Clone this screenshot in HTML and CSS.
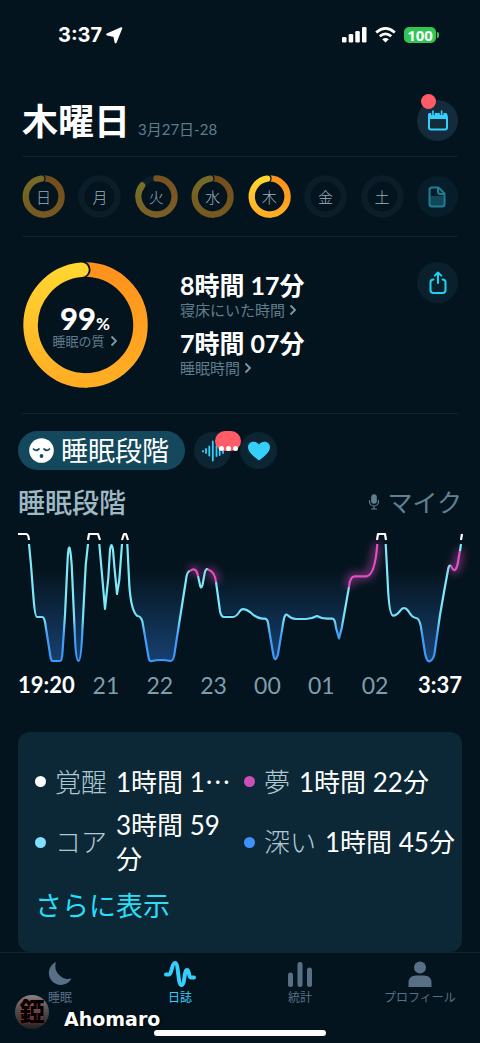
FILE: index.html
```html
<!DOCTYPE html>
<html lang="ja">
<head>
<meta charset="utf-8">
<meta name="viewport" content="width=device-width, initial-scale=1">
<title>睡眠日誌</title>
<link rel="stylesheet" href="styles.css">
</head>
<body>
<svg class="defs" aria-hidden="true">
  <defs>
    <linearGradient id="ring-right" x1="0" y1="0" x2="0" y2="1"><stop offset="0" stop-color="#ff921c"/><stop offset="1" stop-color="#ffae24"/></linearGradient>
    <linearGradient id="ring-left" x1="0" y1="0" x2="0" y2="1"><stop offset="0" stop-color="#ffd530"/><stop offset="1" stop-color="#ffae24"/></linearGradient>
  </defs>
  <symbol id="ring-full" viewBox="0 0 44 44">
    <path d="M22 3.5A18.5 18.5 0 0 1 22 40.5" fill="none" stroke="url(#ring-right)" stroke-width="6.5"/>
    <circle cx="20" cy="3.6" r="4.2" fill="#04141e"/>
    <path d="M22 40.5A18.5 18.5 0 0 1 19.600 3.700" fill="none" stroke="url(#ring-left)" stroke-width="6.5" stroke-linecap="round"/>
  </symbol>
  <symbol id="ring-part" viewBox="0 0 44 44">
    <path d="M22 3.5A18.5 18.5 0 0 1 22 40.5" fill="none" stroke="url(#ring-right)" stroke-width="6.5" stroke-linecap="round"/>
    <path d="M22 40.5A18.5 18.5 0 0 1 7.3 10.7" fill="none" stroke="url(#ring-left)" stroke-width="6.5" stroke-linecap="round"/>
  </symbol>
  <symbol id="ring-track" viewBox="0 0 44 44"><circle cx="22" cy="22" r="18.5" fill="none" stroke="#0a1d29" stroke-width="6.5"/></symbol>
  <symbol id="chevron" viewBox="0 0 8 12"><path d="M1.5 1.5L6 6L1.5 10.5" fill="none" stroke="currentColor" stroke-width="1.8"/></symbol>
</svg>

<div class="app">
  <div class="status">
    <div class="status-time">3:37
      <svg width="17" height="17" viewBox="0 0 17 17"><path d="M15.300 1.200L9.600 15.300L8.300 9L1.200 7.400Z" fill="#fff" stroke="#fff" stroke-width="2" stroke-linejoin="round"/></svg>
    </div>
    <div class="status-icons">
      <svg width="25" height="16" viewBox="0 0 25 16" fill="#fff"><rect y="10" width="4.5" height="5.5" rx="1.3"/><rect x="6.7" y="7" width="4.5" height="8.5" rx="1.3"/><rect x="13.3" y="4" width="4.5" height="11.5" rx="1.3"/><rect x="20" y="0" width="4.5" height="15.5" rx="1.3"/></svg>
      <svg width="21" height="16" viewBox="0 0 21 16" fill="none" stroke="#fff" stroke-width="2.7"><path d="M1.2 5.5Q10.5-2.6 19.8 5.5"/><path d="M4.8 9.3Q10.5 4.4 16.2 9.3"/><path d="M10.5 15.5L7.2 12.2Q10.5 9.6 13.8 12.2Z" fill="#fff" stroke="none"/></svg>
      <span class="battery">100</span>
    </div>
  </div>

  <header class="header divided">
    <div class="title-group">
      <h1 class="title">木曜日</h1>
      <span class="date">3月27日-28</span>
    </div>
    <button class="round calendar" aria-label="カレンダー">
      <svg width="22" height="22" viewBox="0 0 22 22"><path d="M1 4Q1 3 3 3H4.2V4.5A1.8 1.8 0 0 0 7.8 4.5V3H12.8V4.5A1.8 1.8 0 0 0 16.4 4.5V3H18.5Q20.5 3 20.5 5V9H1Z" fill="#35cffc"/><path d="M6 1V4.5M14.6 1V4.5" stroke="#35cffc" stroke-width="1.7" stroke-linecap="round"/><rect x="2" y="6" width="18" height="13.5" rx="2" fill="none" stroke="#35cffc" stroke-width="2"/></svg>
      <span class="dot-badge"></span>
    </button>
  </header>

  <nav class="days divided" aria-label="曜日">
    <button class="day"><svg class="dim"><use href="#ring-full"/></svg><span>日</span></button>
    <button class="day"><svg><use href="#ring-track"/></svg><span>月</span></button>
    <button class="day"><svg><use href="#ring-track"/></svg><svg class="dim"><use href="#ring-part"/></svg><span>火</span></button>
    <button class="day"><svg class="dim"><use href="#ring-full"/></svg><span>水</span></button>
    <button class="day" aria-current="date"><svg><use href="#ring-full"/></svg><span>木</span></button>
    <button class="day"><svg><use href="#ring-track"/></svg><span>金</span></button>
    <button class="day"><svg><use href="#ring-track"/></svg><span>土</span></button>
    <button class="round note" aria-label="メモ">
      <svg width="18" height="22" viewBox="0 0 18 22"><path d="M2 10H16V19Q16 20 15 20H3Q2 20 2 19Z" fill="#124758"/><path d="M10.5 1.5H4Q1.5 1.5 1.5 4V18Q1.5 20.5 4 20.5H14Q16.500 20.500 16.500 18V7.500Z" fill="none" stroke="#1f7d94" stroke-width="2" stroke-linejoin="round"/><path d="M10 2V5.500Q10 8 12.500 8H16" fill="none" stroke="#1f7d94" stroke-width="2"/></svg>
    </button>
  </nav>

  <section class="summary divided">
    <button class="score">
      <svg class="score-ring" viewBox="0 0 126 126" fill="none" stroke-width="14.500">
        <path d="M63 7.500A55.500 55.500 0 0 1 63 118.500" stroke="url(#ring-right)"/>
        <circle cx="60" cy="7.700" r="8.600" fill="#04141e"/>
        <path d="M63 118.500A55.500 55.500 0 0 1 59.500 7.700" stroke="url(#ring-left)" stroke-linecap="round"/>
      </svg>
      <span class="score-value">99<small>%</small></span>
      <span class="score-label">睡眠の質<svg class="chevron"><use href="#chevron"/></svg></span>
    </button>
    <div class="stats">
      <div class="stat"><strong>8時間 17分</strong><a href="#bed">寝床にいた時間<svg class="chevron"><use href="#chevron"/></svg></a></div>
      <div class="stat"><strong>7時間 07分</strong><a href="#sleep">睡眠時間<svg class="chevron"><use href="#chevron"/></svg></a></div>
    </div>
    <button class="round share" aria-label="共有">
      <svg width="18" height="24" viewBox="0 0 18 24" fill="none" stroke="#1fd3f0" stroke-width="2" stroke-linecap="round" stroke-linejoin="round"><path d="M9 12V2M5.800 4.600L9 1.500L12.200 4.600"/><path d="M4.500 8.500Q1.500 8.500 1.500 11V19Q1.500 22 4.500 22H13.500Q16.500 22 16.500 19V11Q16.500 8.500 13.500 8.500"/></svg>
    </button>
  </section>

  <main class="content">
    <div class="tabs">
      <button class="pill">
        <svg width="25" height="25" viewBox="0 0 25 25"><circle cx="12.500" cy="12.500" r="12.300" fill="#fff"/><path d="M4.500 11Q7 13.700 10 11M15 11Q18 13.700 20.500 11" fill="none" stroke="#14495d" stroke-width="1.700" stroke-linecap="round"/><circle cx="12.500" cy="18" r="1.900" fill="#14495d"/></svg>
        睡眠段階
      </button>
      <button class="chip" aria-label="音">
        <svg width="24" height="22" viewBox="0 0 24 22" stroke="#35cffc" stroke-width="1.800" stroke-linecap="round"><path d="M2 11V11.500M5 9V13M8.300 6.500V15.500M11.800 1.500V20.500M15.500 6V16M18.700 8V15M22 10V13"/></svg>
        <span class="more-badge"><i></i><i></i><i></i></span>
      </button>
      <button class="chip" aria-label="心拍数">
        <svg width="22" height="20" viewBox="0 0 22 20"><path d="M11 19.500C8 17 0 12 0 6C0 .500 7.500-1.500 11 3.500C14.500-1.500 22 .500 22 6C22 12 14 17 11 19.500Z" fill="#35cffc"/></svg>
      </button>
    </div>

    <div class="chart-head">
      <h2>睡眠段階</h2>
      <span class="mic"><svg width="12" height="16" viewBox="0 0 12 16" fill="none" stroke="currentColor" stroke-width="1.200" stroke-linecap="round"><rect x="3.800" y=".8" width="4.400" height="8.400" rx="2.200" fill="currentColor"/><path d="M1.500 6.500V7.500A4.500 4.500 0 0 0 10.500 7.500V6.500M6 12V14.500M3.500 15H8.500"/></svg>マイク</span>
    </div>

    <svg class="chart" viewBox="18 530 444 136" fill="none" stroke-width="2.200" stroke-linejoin="round" role="img" aria-label="睡眠段階のグラフ">
      <defs>
        <linearGradient id="line" gradientUnits="userSpaceOnUse" x1="0" y1="544" x2="0" y2="662"><stop offset=".5" stop-color="#7eeaf9"/><stop offset=".64" stop-color="#72dcfa"/><stop offset=".77" stop-color="#459ff7"/><stop offset="1" stop-color="#3d98fa"/></linearGradient>
        <linearGradient id="area" gradientUnits="userSpaceOnUse" x1="0" y1="570" x2="0" y2="661"><stop offset="0" stop-color="#17406f" stop-opacity="0"/><stop offset="1" stop-color="#17406f"/></linearGradient>
        <filter id="glow" filterUnits="userSpaceOnUse" x="170" y="520" width="310" height="120"><feGaussianBlur stdDeviation="4"/></filter>
      </defs>
      <path fill="url(#area)" d="M29 544L31 565L33.500 598Q35 616 37 617H42Q44 617 45 622L50.500 657Q51 661 53 661H60Q62 661 62.500 652L65 615L67.700 558L69.300 546L71.700 565L75 638L77.300 661H79.700L82.300 632L85.700 565L88 544L99 544L105 609L108 578L111 545L117 594L122 544H127L129.300 585Q132 612 137 616Q141 617 142 620L148.500 657Q149 662 152 661Q160 659 170 661Q174 661 175 650L180 618L186 575L189 571L196 569L200 587H202L207 569L214 575L221 615H233L240 610L250 612L260 618H266L273 655L275 659L279 650L284 618L286 614L292 619H333L339 638L347 600L351 578L367 576L377 544H386L391 610L393 616L404 607L413 617L419 620L426 658L429 661L434 656L440 615L450 566L456 571L461 544Z"/>
      <g stroke="url(#line)">
        <path d="M29 544L31 565L33.500 598Q35 617 37 617H42Q44 617 45 622L50.500 657Q51 661 53 661H60Q62 661 62.500 652L65 615L67.700 558Q69.300 534 71.700 565L75 638Q76 661 78.500 661Q81 661 82.300 632L85.700 565L88 544"/>
        <path d="M99.300 544L102.300 578L105 609L108.300 578L110 550Q111.500 540 113 550L114.500 568L117 594L119.300 580L122 544"/>
        <path d="M127.300 544L129.300 585Q131 611 137.300 616Q141 616 142.500 622L148.500 657Q149 662 152 661Q160 659 170.700 661Q174 661 175 650L180 618L186 580Q187 571 190 571"/>
        <path d="M198 576L200 585Q201 590 202.500 585L204.500 574Q205.500 568 208 569.500"/>
        <path d="M216 582L220 611Q221 617 224 617H233Q236 617 240 611Q243 607 250 612Q256 618 262 618.700H265Q268 619 268.500 626L273 653Q275 665 278 654L283.500 621Q285 612 288 615.500Q291 618.700 296 619H306Q311 619 317 616Q322 618.700 327 618.700H332Q335 618 336 628L339 638.500L341.700 628L346.700 600L349 587"/>
        <path d="M385.700 544L387.700 582Q389 615 393 615.700Q396 616 400 611Q404 605 408.300 611Q412 617.500 416 618Q420 618 421.700 631.700L425 653Q427 663 430 661Q434 660 435 650L440 615L444 592L448 570Q449 564 451 566"/>
      </g>
      <g stroke="#e34fc6">
        <g filter="url(#glow)" stroke-width="7" opacity=".5"><path d="M190 571Q196 566 198 576M208 569.500Q215 572 216 582M349 587Q350 576 355 576.300H366Q373 576 377.300 544M451 566Q456 577 458.700 558L460 550"/></g>
        <path d="M190 571Q196 566 198 576M208 569.500Q215 572 216 582M349 587Q350 576 355 576.300H366Q375 576 377.300 544M451 566Q456 577 458.700 558L460 550"/>
      </g>
      <path d="M460 551L461 544" stroke="#7eeaf9"/>
      <path stroke="#fff" d="M18 534H26Q28.500 534 29 540M88 540L89 534H98L100 540M122 540L124 534H126L128 540M377 540L378 534H385L386 540M461 540L462 534"/>
    </svg>
    <div class="axis"><b>19:20</b><span>21</span><span>22</span><span>23</span><span>00</span><span>01</span><span>02</span><b>3:37</b></div>

    <section class="card">
      <dl class="stages">
        <div class="stage awake"><dt>覚醒</dt><dd>1時間 1<span class="cut">…</span></dd></div>
        <div class="stage rem"><dt>夢</dt><dd>1時間 22分</dd></div>
        <div class="stage core"><dt>コア</dt><dd>3時間 59分</dd></div>
        <div class="stage deep"><dt>深い</dt><dd>1時間 45分</dd></div>
      </dl>
      <a class="show-more" href="#more">さらに表示</a>
    </section>
  </main>

  <footer class="bottom">
    <nav class="tabbar">
      <a href="#s"><svg width="24" height="26" viewBox="0 0 24 26"><path d="M8 1A12 12 0 1 0 23.500 17.500A13 13 0 0 1 8 1Z" fill="currentColor"/></svg>睡眠</a>
      <a href="#j" class="active"><svg width="32" height="26" viewBox="0 0 32 26"><path d="M2 13.500H5C8 13.500 7.500 2 11 2C15 2 13.500 24 17.500 24C21 24 20 9 23 9C25.500 9 24.500 16.500 27 16.500H30" fill="none" stroke="currentColor" stroke-width="4" stroke-linecap="round"/></svg>日誌</a>
      <a href="#t"><svg width="24" height="26" viewBox="0 0 24 26" fill="currentColor"><rect y="11.500" width="5" height="14.500" rx="2.500"/><rect x="9.500" y="1" width="5" height="25" rx="2.500"/><rect x="19" y="6.500" width="5" height="19.500" rx="2.500"/></svg>統計</a>
      <a href="#p"><svg width="24" height="26" viewBox="0 0 24 26" fill="currentColor"><circle cx="12" cy="6.500" r="6"/><path d="M.5 26V22Q.5 14.500 8 14.500H16Q23.500 14.500 23.500 22V26Z"/></svg>プロフィール</a>
    </nav>
    <div class="home-bar"></div>
    <div class="signature"><span class="seal">錏</span><span class="name">Ahomaro</span></div>
  </footer>
</div>
</body>
</html>
```
FILE: styles.css
```css
* { box-sizing: border-box; }
body {
  margin: 0;
  background: #04141e;
  color: #fff;
  font-family: Lato, "Noto Sans CJK JP", sans-serif;
}
button {
  border: 0;
  padding: 0;
  background: none;
  color: inherit;
  font: inherit;
}
a { color: inherit; text-decoration: none; }
h1, h2, dl, dd { margin: 0; }
svg { display: block; flex: none; }
.defs { position: absolute; width: 0; height: 0; }
.app { display: flex; flex-direction: column; min-height: 100vh; }

.status {
  display: flex;
  justify-content: space-between;
  align-items: center;
  height: 70px;
  padding: 0 44px 0 58px;
}
.status-time, .status-icons { display: flex; align-items: center; }
.status-time { gap: 4px; font: 700 20px Inter, sans-serif; }
.status-icons { gap: 8px; }
.battery {
  position: relative;
  width: 32px;
  border-radius: 5px;
  background: #2fc653;
  font: 700 15px/16px "Open Sans", sans-serif;
  text-align: center;
}
.battery::after {
  content: "";
  position: absolute;
  right: -3px;
  top: 5px;
  width: 2px;
  height: 6px;
  border-radius: 0 2px 2px 0;
  background: #2fc653;
}

.divided { margin: 0 22px; border-bottom: 1px solid #10232e; }
.header {
  display: flex;
  justify-content: space-between;
  align-items: center;
  height: 87px;
  padding-top: 15px;
}
.title-group { display: flex; align-items: baseline; gap: 8px; }
.title { font-size: 36px; line-height: 48px; font-weight: 700; }
.date { font-size: 15px; color: #5f7c8d; }
.round {
  position: relative;
  display: flex;
  align-items: center;
  justify-content: center;
  width: 41px;
  height: 41px;
  border-radius: 50%;
  background: #0a202d;
}
.calendar { background: #132b3b; }
.dot-badge {
  position: absolute;
  left: 4px;
  top: -6px;
  width: 15px;
  height: 15px;
  border-radius: 50%;
  background: #ff5c68;
}

.days { display: flex; justify-content: space-between; align-items: center; height: 80px; }
.day { display: grid; place-items: center; width: 43px; height: 43px; }
.day > * { grid-area: 1 / 1; }
.day svg { width: 43px; height: 43px; }
.day .dim { opacity: .45; }
.day span { font-size: 15px; line-height: 20px; font-weight: 300; color: #9ab0bc; }
.note { background: #071d29; }

.summary { display: flex; align-items: flex-start; padding: 25px 0; }
.score { display: grid; grid-template-rows: 42px 28px 18px; justify-items: center; width: 126px; height: 126px; }
.score-ring { grid-area: 1 / 1; width: 126px; height: 126px; }
.score-value { grid-area: 2 / 1; font-size: 31px; line-height: 28px; font-weight: 900; }
.score-value small { font-size: 17px; font-weight: 700; }
.score-label { grid-area: 3 / 1; display: flex; align-items: center; gap: 5px; font-size: 13px; line-height: 18px; color: #5f7c8d; }
.chevron { width: 8px; height: 12px; color: #7e98a7; }
.stats { flex: 1; display: grid; gap: 8px; padding: 6px 0 0 32px; }
.stat strong { display: block; font-size: 25px; line-height: 34px; font-weight: 700; }
.stat a { display: flex; align-items: center; gap: 4px; font-size: 15px; line-height: 16px; color: #5f7c8d; }

.content { padding: 17px 18px 0; }
.tabs { display: flex; align-items: center; gap: 9px; }
.pill {
  display: flex;
  align-items: center;
  gap: 7px;
  height: 39px;
  padding: 0 16px 0 11px;
  border-radius: 20px;
  background: #14495d;
  font-size: 27px;
  line-height: 38px;
}
.chip {
  position: relative;
  display: flex;
  align-items: center;
  justify-content: center;
  width: 37px;
  height: 37px;
  border-radius: 50%;
  background: #0b2532;
}
.more-badge {
  position: absolute;
  left: 21px;
  top: -1px;
  display: flex;
  align-items: flex-end;
  justify-content: center;
  gap: 2px;
  width: 26px;
  height: 20px;
  border-radius: 10px;
  background: #ff5c68;
}
.more-badge i { width: 5px; height: 5px; border-radius: 50%; background: #fff; }
.chart-head { display: flex; justify-content: space-between; align-items: center; margin: 14px 0 10px; line-height: 36px; }
.chart-head h2 { font-size: 27px; font-weight: 500; color: #9fb9c4; font-family: "Noto Sans CJK JP", sans-serif; }
.mic { display: flex; align-items: center; gap: 7px; font-size: 25px; color: #5f8292; }
.chart { width: 100%; overflow: visible; }
.axis {
  display: grid;
  grid-template-columns: 61px repeat(6, 1fr) 60px;
  margin-top: 7px;
  font-size: 23px;
  line-height: 24px;
  text-align: center;
  color: #7f9dab;
}
.axis b { color: #fff; font-size: 22px; font-weight: 700; text-align: left; }
.axis b:last-child { text-align: right; }

.card { margin-top: 35px; padding: 32px 0 29px 17px; border-radius: 12px; background: #0c2836; }
.stages {
  display: grid;
  grid-template-columns: 193px 1fr;
  gap: 9px 16px;
  font-size: 26px;
  line-height: 34px;
}
.stage { display: flex; align-items: center; gap: 9px; }
.stage::before { content: ""; flex: none; width: 11px; height: 11px; border-radius: 50%; background: var(--dot); }
.awake { --dot: #fff; }
.rem { --dot: #cc4fb7; }
.core { --dot: #7fdffc; }
.deep { --dot: #3d92fb; }
.stage dt { flex: none; font-weight: 300; color: #b0c8d2; }
.stage dd { font-weight: 400; }
.awake dd, .deep dd { white-space: nowrap; }
.cut { font-family: "Noto Sans CJK JP", sans-serif; }
.show-more { display: inline-block; margin-top: 13px; font-size: 27px; line-height: 34px; color: #29def7; }

.bottom { position: relative; flex: 1; display: flex; flex-direction: column; border-top: 1px solid #10232e; }
.tabbar { display: grid; grid-template-columns: repeat(4, 1fr); padding-top: 8px; }
.tabbar a {
  display: flex;
  flex-direction: column;
  align-items: center;
  gap: 3px;
  font-size: 12px;
  line-height: 16px;
  color: #587086;
}
.tabbar .active { color: #35cffc; }
.home-bar { width: 172px; height: 6px; margin: 24px auto 8px; border-radius: 3px; background: #fff; }
.signature { position: absolute; left: 15px; bottom: 14px; display: flex; align-items: center; gap: 15px; }
.seal {
  width: 34px;
  height: 34px;
  border-radius: 50%;
  background: linear-gradient(#858585, #4a4a4a 50%, #222);
  color: #000;
  font-size: 25px;
  line-height: 32px;
  font-weight: 900;
  text-align: center;
  text-shadow: 0 0 2px #d8323c;
}
.name { font: 700 19px/22px "DejaVu Sans", sans-serif; padding-top: 14px; text-shadow: 1px 1px 2px #000; }
```
